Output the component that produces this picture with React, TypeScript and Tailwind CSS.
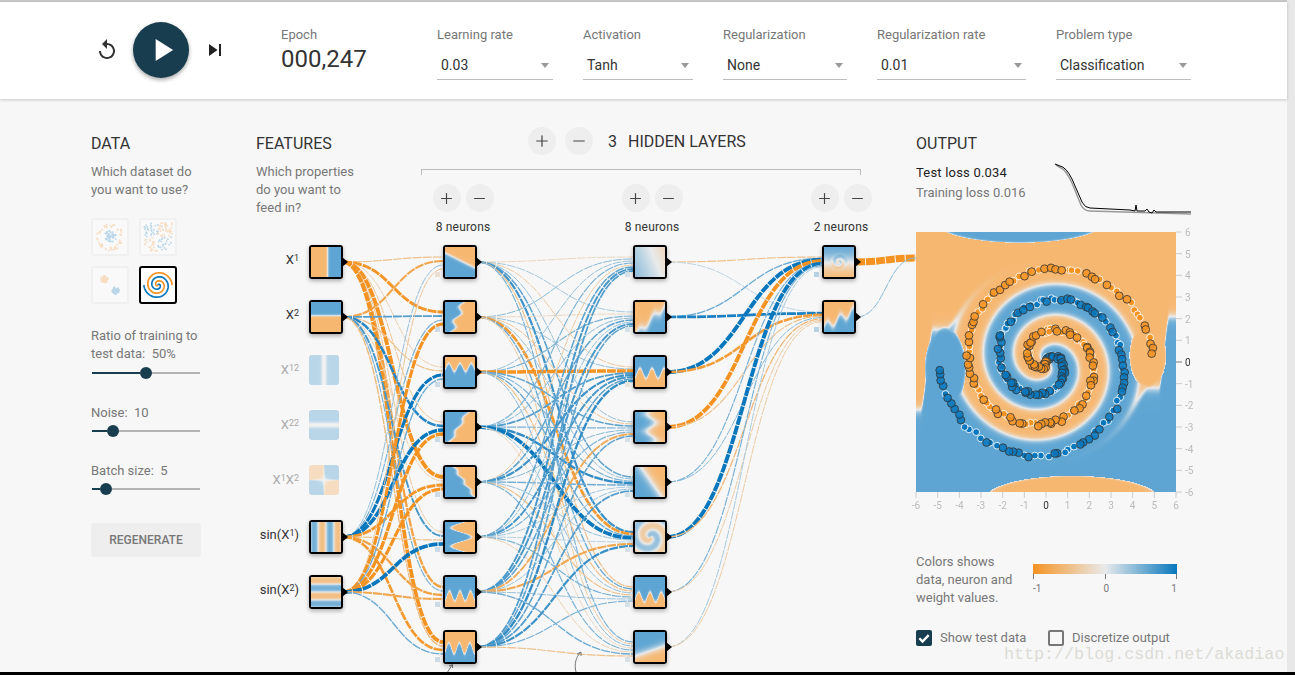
import React, { useEffect, useRef } from "react";
import { Plus, Minus } from "lucide-react";

type Field = (x: number, y: number) => number;

const ORANGE = [246, 183, 112];
const BLUE = [94, 165, 211];
const MID = [232, 234, 235];

function mulberry(seed: number) {
  return () => {
    seed |= 0;
    seed = (seed + 0x6d2b79f5) | 0;
    let t = Math.imul(seed ^ (seed >>> 15), 1 | seed);
    t = (t + Math.imul(t ^ (t >>> 7), 61 | t)) ^ t;
    return ((t ^ (t >>> 14)) >>> 0) / 4294967296;
  };
}

const smooth = (a: number, b: number, v: number) => {
  const t = Math.min(1, Math.max(0, (v - a) / (b - a)));
  return t * t * (3 - 2 * t);
};

const spiral = (x: number, y: number) => Math.cos(Math.atan2(x, y) - (1.75 * 2 * Math.PI * Math.hypot(x, y)) / 5);

// the trained output field: the spiral in the middle, hand fitted blobs round it
const outputField: Field = (x, y) => {
  const r = Math.hypot(x, y);
  const far = smooth(-2.8, -3.8, x);
  const lineL = (-2.2 + 3.7 * smooth(-5.8, -5.2, x)) * far - 1.2 * (1 - far);
  const lineR = -1.2 + 3.3 * smooth(5.2, 5.7, x);
  const outer = Math.tanh(((x < 0 ? lineL : lineR) - y) * 1.5);
  const w = 1 - smooth(4.4, 4.9, r);
  let f = w * spiral(x, y) + (1 - w) * outer;
  const top = 1 - Math.hypot((x + 1.2) / 3.9, (y - 6.45) / 0.95);
  if (top > 0) f = Math.max(f, top * 8);
  const bottom = 1 - Math.hypot((x - 1.2) / 4, (y + 6.3) / 1.05);
  if (bottom > 0) f = Math.min(f, -bottom * 8);
  const leftBlob = 1 - Math.hypot((x + 4.65) / 0.95, (y + 0.3) / 1.9);
  if (leftBlob > 0) f = Math.max(f, leftBlob * 6);
  const rightBlob = 1 - Math.hypot((x - 4.7) / 0.85, (y - 0.3) / 1.5);
  if (rightBlob > 0) f = Math.min(f, -rightBlob * 6);
  return f;
};

function Heatmap({ fn, size, steep = 3.5 }: { fn: Field; size: number; steep?: number }) {
  const ref = useRef<HTMLCanvasElement>(null);
  useEffect(() => {
    const ctx = ref.current?.getContext("2d");
    if (!ctx) return;
    const img = ctx.createImageData(size, size);
    for (let j = 0; j < size; j++) {
      for (let i = 0; i < size; i++) {
        const x = -6 + (12 * (i + 0.5)) / size;
        const y = 6 - (12 * (j + 0.5)) / size;
        const t = Math.tanh(fn(x, y) * steep);
        const end = t > 0 ? BLUE : ORANGE;
        const a = Math.abs(t);
        const k = (j * size + i) * 4;
        for (let c = 0; c < 3; c++) img.data[k + c] = MID[c] + (end[c] - MID[c]) * a;
        img.data[k + 3] = 255;
      }
    }
    ctx.putImageData(img, 0, 0);
  }, [fn, size, steep]);
  return <canvas ref={ref} width={size} height={size} className="block" />;
}

const supClass = "text-[9px] top-[-0.35em]";

const inputs: { key: string; label: React.ReactNode; fn: Field; on: boolean }[] = [
  { key: "x1", label: <>X<sup className={supClass}>1</sup></>, fn: (x) => x * 1.5 - 1, on: true },
  { key: "x2", label: <>X<sup className={supClass}>2</sup></>, fn: (_, y) => y * 1.5 - 0.8, on: true },
  { key: "x12", label: <>X<sup className={supClass}>12</sup></>, fn: (x) => (x * x) / 3 - 0.03, on: false },
  { key: "x22", label: <>X<sup className={supClass}>22</sup></>, fn: (_, y) => (y * y) / 3 - 0.03, on: false },
  { key: "x1x2", label: <>X<sup className={supClass}>1</sup>X<sup className={supClass}>2</sup></>, fn: (x, y) => (x * y) / 2, on: false },
  { key: "s1", label: <>sin(X<sup className={supClass}>1</sup>)</>, fn: (x) => Math.sin(x) * 0.9, on: true },
  { key: "s2", label: <>sin(X<sup className={supClass}>2</sup>)</>, fn: (_, y) => Math.sin(y) * 0.9, on: true },
];

const layer1: Field[] = [
  (x, y) => 0.6 - 0.5 * x - y,
  (x, y) => -1 + 0.42 * y + 1.1 * Math.sin(y * 1.1) - x,
  (x, y) => 1.8 + 1.6 * Math.cos(1.4 * x) - y,
  (x, y) => -0.5 + 0.6 * y + 0.6 * Math.sin(y * 1.2) - x,
  (x, y) => 1.7 - 0.7 * y + 0.5 * Math.sin(y * 1.6) - x,
  (x, y) => 0.5 + 4 * Math.cos(y * 0.85) - x,
  (x, y) => y + 1.6 - 2 * Math.cos(1.5 * x),
  (x, y) => -0.6 + 2.2 * Math.cos(1.5 * x + 0.4) - y,
];

const layer2: Field[] = [
  (x, y) => (-x - 0.4 * y) * 0.05 + 0.12,
  (x, y) => (x - y - 1.5 + 1.2 * Math.sin(x * 1.1)) * 0.35,
  (x, y) => y + 0.5 - 2 * Math.sin(1.3 * x + 0.5),
  (x, y) => (-x + 1.6 * Math.sin(y * 0.9) + 0.5) * 0.3,
  (x, y) => (-x - 0.7 * y + 0.5) * 0.3,
  (x, y) => Math.cos(Math.atan2(x, y) - Math.hypot(x, y) * 0.9 + 0.8) * 0.5,
  (x, y) => y + 2 - 2 * Math.cos(1.4 * x),
  (x, y) => (y + 1.6 - 0.35 * x) * 0.4,
];

const layer3: Field[] = [
  (x, y) => y * 0.18 + 0.25 * spiral(x * 1.2, y * 1.2) * (1 - smooth(1, 5, Math.hypot(x, y))) + 0.05,
  (x, y) => (x * 0.55 - y - 0.8 + 1.6 * Math.sin(x * 1.2 + 1)) * 0.5,
];

// link weights, source row by target column, -1 orange .. 1 blue
const w01 = [
  [-0.3, -0.75, -0.15, -0.25, -1, -0.2, -0.6, -0.95],
  [-0.55, 0.45, -0.3, 0.65, -0.15, 0.5, 0.3, -0.35],
  [0.2, 0.3, 0.8, 0.9, -0.75, -0.3, -0.6, -0.7],
  [-0.25, -0.8, 0.35, -0.85, -0.8, 0.95, -0.55, 0.35],
];
const w12 = [
  [-0.1, 0.15, -0.2, 0.2, 0.4, 0.55, -0.3, 0.3],
  [0.25, -0.1, 0.2, -0.25, 0.2, -0.7, 0.35, -0.2],
  [0.2, 0.3, -0.9, 0.4, 0.3, 0.35, -0.3, 0.25],
  [0.3, 0.25, 0.45, 0.3, 0.6, 0.95, 0.2, -0.1],
  [-0.2, 0.4, 0.55, 0.25, 0.35, 0.2, -0.3, 0.3],
  [0.4, 0.2, 0.5, 0.3, 0.15, 0.1, 0.3, -0.15],
  [0.5, 0.5, 0.4, -0.5, 0.2, -0.55, 0.2, 0.35],
  [0.45, 0.4, 0.6, 0.4, 0.45, 0.55, 0.3, -0.3],
];
const w23 = [
  [-0.3, 0.08],
  [0.35, 0.7],
  [1, -0.65],
  [-1, -0.3],
  [0.3, 0.25],
  [1, -0.35],
  [0.3, -0.2],
  [0.15, -0.2],
];

const rowY = (i: number) => 245 + i * 55;
const ACTIVE_INPUTS = [0, 1, 5, 6];
const COL = { input: 309, l1: 443, l2: 633, l3: 822 };

function linkColor(w: number) {
  const end = w > 0 ? [8, 119, 189] : [245, 147, 34];
  const a = Math.min(1, Math.pow(Math.abs(w), 0.75) * 1.2);
  const c = MID.map((m, i) => Math.round(m + (end[i] - m) * a));
  return `rgb(${c[0]},${c[1]},${c[2]})`;
}

function Link({ x1, y1, x2, y2, w }: { x1: number; y1: number; x2: number; y2: number; w: number }) {
  const mid = (x1 + x2) / 2;
  return (
    <path
      d={`M${x1} ${y1}C${mid} ${y1} ${mid} ${y2} ${x2} ${y2}`}
      fill="none"
      stroke={linkColor(w)}
      strokeWidth={Math.max(1, Math.abs(w) * 3.9)}
      strokeDasharray="9 1"
    />
  );
}

function Links() {
  const paths: React.ReactNode[] = [];
  w01.forEach((row, s) =>
    row.forEach((w, t) => {
      paths.push(<Link key={`a${s}${t}`} x1={COL.input + 34} y1={rowY(ACTIVE_INPUTS[s]) + 17} x2={COL.l1} y2={rowY(t) + 12 + s * 4} w={w} />);
    })
  );
  w12.forEach((row, s) =>
    row.forEach((w, t) => {
      paths.push(<Link key={`b${s}${t}`} x1={COL.l1 + 34} y1={rowY(s) + 17} x2={COL.l2} y2={rowY(t) + 12 + s * 2} w={w} />);
    })
  );
  w23.forEach((row, s) =>
    row.forEach((w, t) => {
      paths.push(<Link key={`c${s}${t}`} x1={COL.l2 + 34} y1={rowY(s) + 17} x2={COL.l3} y2={rowY(t) + 12 + s * 1.4} w={w} />);
    })
  );
  paths.push(<Link key="o1" x1={COL.l3 + 34} y1={rowY(0) + 17} x2={916} y2={258} w={-1.8} />);
  paths.push(<Link key="o2" x1={COL.l3 + 34} y1={rowY(1) + 17} x2={916} y2={258} w={0.25} />);
  return (
    <svg className="absolute left-0 top-0" width={660} height={573} viewBox="256 99 660 573">
      {paths}
      <path d="M447 673L452 665M449 666L452.5 664.5L452.5 668" fill="none" stroke="#777" strokeWidth={1} />
      <path d="M576 672C574 664 576 657 580.5 652.5M577 654L581 652L581 656" fill="none" stroke="#777" strokeWidth={1} />
    </svg>
  );
}

function Node({ left, top, fn, bias }: { left: number; top: number; fn: Field; bias?: number }) {
  return (
    <div className="absolute" style={{ left: left - 256, top: top - 99 }}>
      <div className="w-[34px] h-[34px] border-2 border-black rounded-[3px] overflow-hidden shadow-[0_2px_4px_rgba(0,0,0,0.3)]">
        <Heatmap fn={fn} size={30} steep={1.4} />
      </div>
      <svg className="absolute left-[33px] top-[12px]" width={7} height={10}>
        <path d="M0 0L6 5L0 10Z" fill="#000" />
      </svg>
      {bias !== undefined && (
        <div className="absolute left-[-8px] top-[27px] w-[5px] h-[5px]" style={{ backgroundColor: linkColor(bias * 0.1) }} />
      )}
    </div>
  );
}

function RoundButton({ minus, big }: { minus?: boolean; big?: boolean }) {
  const Icon = minus ? Minus : Plus;
  return (
    <button className="w-[28px] h-[28px] rounded-full bg-[#eeeeee] flex items-center justify-center text-[#444]">
      <Icon size={big ? 18 : 17} strokeWidth={1.6} />
    </button>
  );
}

function LayerControl({ label }: { label: string }) {
  return (
    <div className="w-[80px] shrink-0 flex flex-col items-center">
      <div className="flex gap-[5px]">
        <RoundButton />
        <RoundButton minus />
      </div>
      <div className="mt-[7px] text-[12px] leading-[16px] tracking-[0.2px] text-[#333]">{label}</div>
    </div>
  );
}

function Slider({ filled }: { filled: number }) {
  return (
    <div className="flex items-center w-[108px] ml-[1px] h-[12px]">
      <div className="h-[2px] bg-[#183d4e]" style={{ width: filled }} />
      <div className="w-[12px] h-[12px] rounded-full bg-[#183d4e] shrink-0" />
      <div className="h-[2px] flex-1 bg-[#b3b3b3]" />
    </div>
  );
}

function Select({ label, value, width }: { label: string; value: string; width: string }) {
  return (
    <div className={width}>
      <div className="text-[13px] leading-[18px] text-[#777]">{label}</div>
      <div className="mt-[5px] h-[31px] border-b border-[#bdbdbd] flex items-center justify-between pl-[4px] pr-[4px] pt-[2px]">
        <span className="text-[14px] text-[#333]">{value}</span>
        <svg width={8} height={5}>
          <path d="M0 0H8L4 5Z" fill="#999" />
        </svg>
      </div>
    </div>
  );
}

type Dot = { x: number; y: number; blue: boolean };

function clusterDots(seed: number, kind: "circle" | "xor" | "gauss"): Dot[] {
  const rnd = mulberry(seed);
  const dots: Dot[] = [];
  for (let i = 0; i < 110; i++) {
    const blue = i % 2 === 0;
    if (kind === "circle") {
      const r = blue ? rnd() * 2.2 : 3.6 + rnd() * 1.2;
      const a = rnd() * 6.28;
      dots.push({ x: r * Math.sin(a), y: r * Math.cos(a), blue });
    } else if (kind === "xor") {
      const x = (rnd() - 0.5) * 10;
      const y = (rnd() - 0.5) * 10;
      dots.push({ x, y, blue: x * y > 0 });
    } else {
      const a = rnd() * 6.28;
      const r = rnd() * 1.3;
      const c = blue ? 2 : -2;
      dots.push({ x: c + r * Math.sin(a), y: c + r * Math.cos(a), blue });
    }
  }
  return dots;
}

function spiralDots(n: number, seed: number, noise: number) {
  const rnd = mulberry(seed);
  const dots: (Dot & { test: boolean })[] = [];
  [0, Math.PI].forEach((delta) => {
    for (let i = 0; i < n; i++) {
      const r = (i / n) * 5;
      const t = ((1.75 * i) / n) * 2 * Math.PI + delta;
      dots.push({
        x: r * Math.sin(t) + (rnd() * 2 - 1) * noise,
        y: r * Math.cos(t) + (rnd() * 2 - 1) * noise,
        blue: delta === 0,
        test: rnd() > 0.5,
      });
    }
  });
  return dots;
}

function DatasetThumb({ kind, seed }: { kind: "circle" | "xor" | "gauss"; seed: number }) {
  return (
    <div className="w-[38px] h-[38px] border-2 border-[#f0f0f0] rounded-[3px] bg-[#f9f9f9]">
      <svg width={34} height={34} viewBox="-6 -6 12 12" className="opacity-40">
        {clusterDots(seed, kind).map((d, i) => (
          <circle key={i} cx={d.x} cy={d.y} r={0.32} fill={d.blue ? "#5fa5d3" : "#f5b56f"} />
        ))}
      </svg>
    </div>
  );
}

function SpiralThumb() {
  const arm = (delta: number) => {
    let d = "";
    for (let i = 0; i <= 80; i++) {
      const r = (i / 80) * 5;
      const t = ((1.75 * i) / 80) * 2 * Math.PI + delta;
      d += `${i ? "L" : "M"}${(r * Math.sin(t)).toFixed(2)} ${(-r * Math.cos(t)).toFixed(2)}`;
    }
    return d;
  };
  return (
    <div className="w-[38px] h-[38px] border-2 border-black rounded-[3px] bg-white flex items-center justify-center">
      <svg width={34} height={34} viewBox="-6 -6 12 12">
        <path d={arm(0)} fill="none" stroke="#0877bd" strokeWidth={0.6} />
        <path d={arm(Math.PI)} fill="none" stroke="#f59322" strokeWidth={0.6} />
      </svg>
    </div>
  );
}

const outputDots = spiralDots(180, 7, 0.09);
const ticks = [-6, -5, -4, -3, -2, -1, 0, 1, 2, 3, 4, 5, 6];

function OutputPlot() {
  const px = (v: number) => 130 + v * (130 / 6);
  const py = (v: number) => 130 - v * (130 / 6);
  return (
    <div className="relative w-[275px] h-[321px]">
      <Heatmap fn={outputField} size={260} steep={3} />
      <svg className="absolute left-0 top-0 overflow-visible" width={260} height={260}>
        {outputDots.filter((d) => !d.test).map((d, i) => (
          <circle key={i} cx={px(d.x)} cy={py(d.y)} r={3.4} fill={d.blue ? "#0877bd" : "#f59322"} stroke="#fff" strokeOpacity={0.85} strokeWidth={1} />
        ))}
        {outputDots.filter((d) => d.test).map((d, i) => (
          <circle key={i} cx={px(d.x)} cy={py(d.y)} r={3.9} fill={d.blue ? "#0877bd" : "#f59322"} fillOpacity={0.85} stroke="#333" strokeOpacity={0.8} strokeWidth={1} />
        ))}
        {ticks.map((t) => (
          <g key={t} fontSize={10} fontFamily="Roboto, sans-serif" fill={t === 0 ? "#333" : "#bbb"}>
            <line x1={260} x2={266} y1={py(t)} y2={py(t)} stroke={t === 0 ? "#777" : "#ccc"} />
            <text x={269} y={py(t) + 4}>{t}</text>
            <line x1={px(t)} x2={px(t)} y1={260} y2={266} stroke="#ccc" />
            <text x={px(t)} y={277} textAnchor="middle">{t}</text>
          </g>
        ))}
      </svg>
    </div>
  );
}

function LossChart() {
  const test = "M1 2L6 4Q12 5 18 17L28 40Q31 46 36 46L76 48L81 49L82 43L83 49L91 49L93 47L95 50L98 51L100 48L102 50L137 50";
  const train = "M2 3L7 6Q12 8 18 21L27 43Q30 49 36 49L137 52";
  return (
    <svg width={137} height={56} className="block">
      <path d={train} fill="none" stroke="#999" strokeWidth={1.5} />
      <path d={test} fill="none" stroke="#000" strokeWidth={1} />
    </svg>
  );
}

export default function App() {
  return (
    <div className="flex flex-col h-screen w-[1295px] overflow-hidden bg-[#f7f7f7] font-['Roboto',sans-serif]">
      <div className="flex-1 flex min-h-0">
        <div className="flex-1 flex flex-col min-w-0">
          <div className="h-[2px] bg-[#c8c8c8]" />
          {/* Top controls */}
          <div className="h-[97px] bg-white shadow-[0_1px_3px_rgba(0,0,0,0.2)] flex items-start relative">
            <div className="w-[281px] h-[97px] flex items-center pl-[95px] pb-[1px]">
              <svg width={24} height={24} viewBox="0 0 24 24" className="shrink-0">
                <path fill="#333" d="M12 5V1L7 6l5 5V7c3.31 0 6 2.69 6 6s-2.69 6-6 6-6-2.69-6-6H4c0 4.42 3.58 8 8 8s8-3.58 8-8-3.58-8-8-8z" />
              </svg>
              <div className="ml-[14px] w-[56px] h-[56px] rounded-full bg-[#183d4e] shadow-[0_2px_4px_rgba(0,0,0,0.35)] flex items-center justify-center shrink-0">
                <svg width={38} height={38} viewBox="0 0 24 24" className="ml-[2px]">
                  <path fill="#fff" d="M8 5v14l11-7z" />
                </svg>
              </div>
              <svg width={24} height={24} viewBox="0 0 24 24" className="ml-[14px] shrink-0">
                <path fill="#222" d="M6 18l8.5-6L6 6v12zM16 6v12h2V6h-2z" />
              </svg>
            </div>
            <div className="w-[156px] pt-[24px]">
              <div className="text-[13px] leading-[18px] text-[#777]">Epoch</div>
              <div className="text-[24px] leading-[28px] text-[#333] mt-[1px]">000,247</div>
            </div>
            <div className="flex gap-[30px] pt-[24px]">
              <Select label="Learning rate" value="0.03" width="w-[116px]" />
              <Select label="Activation" value="Tanh" width="w-[110px]" />
              <Select label="Regularization" value="None" width="w-[124px]" />
              <Select label="Regularization rate" value="0.01" width="w-[149px]" />
              <Select label="Problem type" value="Classification" width="w-[135px]" />
            </div>
          </div>

          <div className="flex-1 flex pl-[91px] relative">
            {/* Data */}
            <div className="w-[165px] pt-[35px]">
              <h4 className="text-[16px] leading-[20px] text-[#333]">DATA</h4>
              <p className="mt-[9px] text-[13px] leading-[18px] text-[#777]">
                Which dataset do
                <br />
                you want to use?
              </p>
              <div className="mt-[19px] grid grid-cols-[38px_38px] gap-[10px]">
                <DatasetThumb kind="circle" seed={3} />
                <DatasetThumb kind="xor" seed={5} />
                <DatasetThumb kind="gauss" seed={9} />
                <SpiralThumb />
              </div>
              <p className="mt-[23px] text-[13px] leading-[18px] text-[#777] whitespace-pre">
                {"Ratio of training to\ntest data:  50%"}
              </p>
              <div className="mt-[4px]">
                <Slider filled={48} />
              </div>
              <p className="mt-[25px] text-[13px] leading-[18px] text-[#777] whitespace-pre">{"Noise:  10"}</p>
              <div className="mt-[3px]">
                <Slider filled={15} />
              </div>
              <p className="mt-[25px] text-[13px] leading-[18px] text-[#777] whitespace-pre">{"Batch size:  5"}</p>
              <div className="mt-[3px]">
                <Slider filled={8} />
              </div>
              <button className="mt-[28px] w-[110px] h-[34px] rounded-[3px] bg-[#eeeeee] text-[12px] font-medium text-[#777]">
                REGENERATE
              </button>
            </div>

            {/* Features + network */}
            <div className="w-[660px] relative">
              <Links />
              {inputs.map((inp, i) =>
                inp.on ? (
                  <Node key={inp.key} left={COL.input} top={rowY(i)} fn={inp.fn} />
                ) : (
                  <div key={inp.key} className="absolute w-[30px] h-[30px] rounded-[3px] overflow-hidden opacity-40" style={{ left: COL.input - 256, top: rowY(i) - 99 }}>
                    <Heatmap fn={inp.fn} size={30} steep={2} />
                  </div>
                )
              )}
              {inputs.map((inp, i) => (
                <div
                  key={inp.key}
                  className={`absolute w-[60px] text-right text-[13px] leading-[18px] ${inp.on ? "text-[#333]" : "text-[#aaa]"}`}
                  style={{ left: 299 - 60 - 256, top: rowY(i) + 6 - 99 }}
                >
                  {inp.label}
                </div>
              ))}
              {layer1.map((fn, i) => (
                <Node key={i} left={COL.l1} top={rowY(i)} fn={fn} bias={i === 0 ? -0.5 : 0.5} />
              ))}
              {layer2.map((fn, i) => (
                <Node key={i} left={COL.l2} top={rowY(i)} fn={fn} bias={i === 2 ? -0.2 : 0.3} />
              ))}
              {layer3.map((fn, i) => (
                <Node key={i} left={COL.l3} top={rowY(i)} fn={fn} bias={1} />
              ))}

              <div className="relative flex pt-[28px]">
                <div className="w-[165px] pt-[7px]">
                  <h4 className="text-[16px] leading-[20px] text-[#333]">FEATURES</h4>
                  <p className="mt-[9px] text-[13px] leading-[18px] text-[#777]">
                    Which properties
                    <br />
                    do you want to
                    <br />
                    feed in?
                  </p>
                </div>
                <div className="w-[440px]">
                  <div className="flex items-center pl-[107px] gap-[9px] h-[28px]">
                    <RoundButton big />
                    <RoundButton big minus />
                    <span className="ml-[6px] mt-[2px] text-[16px] text-[#333]">3</span>
                    <span className="ml-[2px] mt-[2px] text-[16px] text-[#333]">HIDDEN LAYERS</span>
                  </div>
                  <div className="mt-[14px] h-[6px] border-t border-x border-[#bbbbbb]" />
                  <div className="mt-[9px] ml-[2px] flex gap-[109px]">
                    <LayerControl label="8 neurons" />
                    <LayerControl label="8 neurons" />
                    <LayerControl label="2 neurons" />
                  </div>
                </div>
              </div>
            </div>

            {/* Output */}
            <div className="w-[275px] pt-[35px] relative">
              <h4 className="text-[16px] leading-[20px] text-[#333]">OUTPUT</h4>
              <div className="mt-[8px] w-[275px] h-[70px] flex">
                <div className="w-[138px] text-[13px] leading-[20px] pt-[1px]">
                  <div className="text-[#222] tracking-[0.2px]">Test loss 0.034</div>
                  <div className="text-[#777]">Training loss 0.016</div>
                </div>
                <LossChart />
              </div>
              <OutputPlot />
              <div className="flex">
                <p className="w-[117px] text-[13px] leading-[18px] text-[#777]">
                  Colors shows
                  <br />
                  data, neuron and
                  <br />
                  weight values.
                </p>
                <div className="w-[144px] mt-[11px]">
                  <div className="h-[10px] bg-[linear-gradient(to_right,#f59322,#e8eaeb,#0877bd)]" />
                  <div className="flex justify-between">
                    <div className="w-px h-[5px] bg-[#777]" />
                    <div className="w-px h-[5px] bg-[#777]" />
                    <div className="w-px h-[5px] bg-[#777]" />
                  </div>
                  <div className="flex justify-between text-[10px] leading-[14px] text-[#777] mt-[3px]">
                    <span>-1</span>
                    <span>0</span>
                    <span>1</span>
                  </div>
                </div>
              </div>
              <div className="mt-[23px] flex items-center h-[16px] text-[13px] text-[#777]">
                <div className="w-[16px] h-[16px] rounded-[2px] bg-[#183d4e] flex items-center justify-center">
                  <svg width={14} height={14} viewBox="0 0 24 24">
                    <path fill="none" stroke="#fff" strokeWidth={4} d="M4 12.5l5.5 5.5L20 7" />
                  </svg>
                </div>
                <span className="ml-[8px] w-[108px]">Show test data</span>
                <div className="w-[16px] h-[16px] rounded-[2px] border-2 border-[#777]" />
                <span className="ml-[8px]">Discretize output</span>
              </div>
            </div>

            <div className="absolute left-[1004px] top-[545px] font-['Liberation_Mono',monospace] text-[16.7px] leading-[22px] text-[#dcdcd6] whitespace-nowrap">
              http://blog.csdn.net/akadiao
            </div>
          </div>
        </div>
        <div className="w-[8px] bg-[#e8e8e8]" />
      </div>
      <div className="h-[3px] bg-black" />
    </div>
  );
}
